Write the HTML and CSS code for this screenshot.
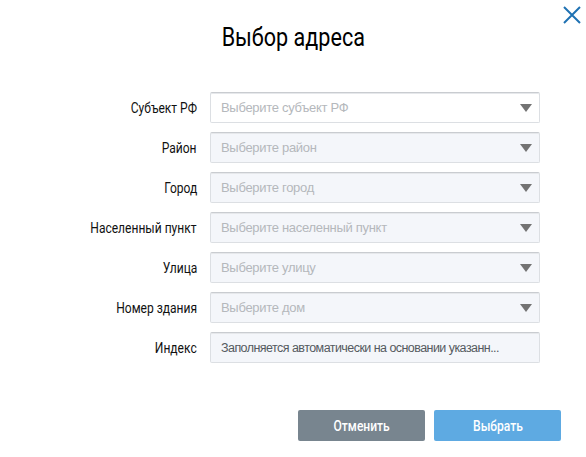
FILE: index.html
```html
<!DOCTYPE html>
<html lang="ru">
<head>
<meta charset="utf-8">
<link rel="stylesheet" href="styles.css">
</head>
<body>
<div class="modal">
  <button class="close" aria-label="Закрыть">
    <svg width="20" height="20" viewBox="0 0 20 20"><path d="M2 2 L18 18 M18 2 L2 18" stroke="#1f72b3" stroke-width="2" fill="none"/></svg>
  </button>
  <h1 class="title"><span class="cond">Выбор адреса</span></h1>
  <div class="form">
    <div class="row"><label class="lbl"><span class="cond">Субъект РФ</span></label><div class="field white"><span class="ph">Выберите субъект РФ</span><span class="arrow"></span></div></div>
    <div class="row"><label class="lbl"><span class="cond">Район</span></label><div class="field"><span class="ph">Выберите район</span><span class="arrow"></span></div></div>
    <div class="row"><label class="lbl"><span class="cond">Город</span></label><div class="field"><span class="ph">Выберите город</span><span class="arrow"></span></div></div>
    <div class="row"><label class="lbl"><span class="cond">Населенный пункт</span></label><div class="field"><span class="ph">Выберите населенный пункт</span><span class="arrow"></span></div></div>
    <div class="row"><label class="lbl"><span class="cond">Улица</span></label><div class="field"><span class="ph">Выберите улицу</span><span class="arrow"></span></div></div>
    <div class="row"><label class="lbl"><span class="cond">Номер здания</span></label><div class="field"><span class="ph">Выберите дом</span><span class="arrow"></span></div></div>
    <div class="row"><label class="lbl"><span class="cond">Индекс</span></label><div class="field"><span class="val">Заполняется автоматически на основании указанн...</span></div></div>
  </div>
  <div class="actions">
    <button class="btn cancel"><span class="cond">Отменить</span></button>
    <button class="btn ok"><span class="cond">Выбрать</span></button>
  </div>
</div>
</body>
</html>
```
FILE: styles.css
```css
html, body { margin: 0; padding: 0; background: #fff; }
body { width: 586px; height: 457px; overflow: hidden; }
.modal { position: relative; padding-top: 21px; }
.close { position: absolute; top: 5px; right: 4px; width: 20px; height: 20px; padding: 0; border: 0; background: none; }
.close svg { display: block; }
.cond { display: inline-block; transform: scaleX(0.86); }
.title {
  margin: 0; text-align: center;
  font-family: "Roboto", sans-serif;
  font-weight: normal; font-size: 26px; line-height: 32px; color: #000;
}
.title .cond { transform: scaleX(0.83); }
.form { display: flex; flex-direction: column; gap: 9px; padding-top: 39px; }
.row { display: flex; align-items: center; height: 31px; }
.lbl {
  width: 210px; text-align: right; padding-right: 13px; box-sizing: border-box;
  font-family: "Roboto", sans-serif; font-size: 14px; color: #111;
}
.lbl .cond { transform-origin: right center; }
.field {
  width: 330px; height: 31px; box-sizing: border-box;
  border: 1px solid #dcdfe3; border-top-color: #c9ccd0; border-radius: 2px;
  background: #f4f6fa; display: flex; align-items: center; padding: 0 7px 0 10px;
  box-shadow: inset 0 1px 0 #e6e8eb;
}
.field.white { background: #fff; }
.ph, .val { flex: 1; font-family: "Liberation Sans", Arial, sans-serif; font-size: 13px; letter-spacing: -0.3px; color: #b5b8bc; white-space: nowrap; }
.val { color: #555a60; font-size: 12.5px; letter-spacing: -0.55px; }
.arrow { width: 0; height: 0; border-left: 6px solid transparent; border-right: 6px solid transparent; border-top: 8px solid #737373; }
.actions { display: flex; justify-content: flex-end; gap: 9px; padding-right: 25px; padding-top: 47px; }
.btn {
  width: 127px; height: 31px; border: 0; border-radius: 2px; color: #fff; padding: 0;
  font-family: "Roboto", sans-serif; font-size: 14px; font-weight: 500;
}
.cancel { background: #78858f; }
.ok { background: #5eaae2; }
```
